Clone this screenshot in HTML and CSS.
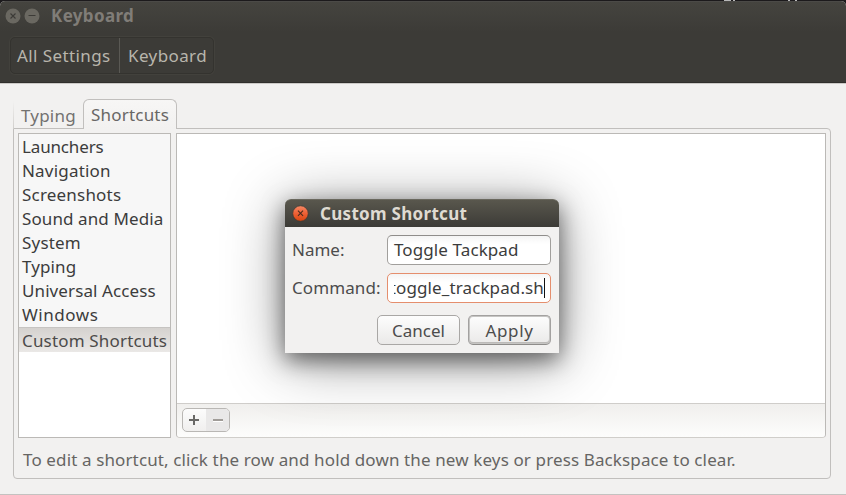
FILE: index.html
```html
<!DOCTYPE html>
<html lang="en">
<head>
<meta charset="utf-8">
<title>Keyboard</title>
<link rel="stylesheet" href="styles.css">
</head>
<body>
<div class="desktop">
  <div class="behind" aria-hidden="true"><i class="speck s1"></i><i class="speck s2"></i><i class="speck s3"></i><i class="speck s4"></i></div>
  <main class="window">
    <header class="header">
      <div class="titlebar">
        <svg class="winbtn" viewBox="0 0 16 16"><circle cx="8" cy="8" r="7.5" fill="#6a6861"/><path d="M5.5 5.5l5 5m0-5l-5 5" stroke="#3c3b37" stroke-width="1.1"/></svg>
        <svg class="winbtn" viewBox="0 0 16 16"><circle cx="8" cy="8" r="7.5" fill="#6a6861"/><path d="M4.5 7.5h7" stroke="#3c3b37" stroke-width="1"/></svg>
        <h1 class="title">Keyboard</h1>
      </div>
      <nav class="crumbs">
        <span class="crumb crumb-all"><span class="t-all">All Settings</span></span>
        <span class="crumb"><span class="t-kb">Keyboard</span></span>
      </nav>
    </header>
    <section class="content">
      <div class="tabs">
        <div class="tab"><span class="t-typ">Typing</span></div>
        <div class="tab tab-active"><span class="t-short">Shortcuts</span></div>
      </div>
      <div class="page">
        <div class="panes">
          <ul class="list">
            <li class="l1">Launchers</li>
            <li class="l2">Navigation</li>
            <li class="l3">Screenshots</li>
            <li class="l4">Sound and Media</li>
            <li class="l5">System</li>
            <li class="l6">Typing</li>
            <li class="l7">Universal Access</li>
            <li class="l8">Windows</li>
            <li class="selected">Custom Shortcuts</li>
          </ul>
          <div class="detail">
            <div class="blank"></div>
            <div class="toolbar">
              <div class="group">
                <span class="tool"><svg viewBox="0 0 24 22"><path d="M7 11h10M12 6v10" stroke="#696866" stroke-width="2"/></svg></span>
                <span class="tool off"><svg viewBox="0 0 24 22"><path d="M8 12.5h10" stroke="#fff"/><path d="M8 11h10" stroke="#a09c98" stroke-width="2"/></svg></span>
              </div>
            </div>
          </div>
        </div>
        <p class="hint"><span>To edit a shortcut, click the row and hold down the new keys or press Backspace to clear.</span></p>
      </div>
    </section>
  </main>
  <section class="dialog">
    <header class="dialog-title">
      <svg class="close" viewBox="0 0 16 16"><defs><linearGradient id="o" x2="0" y2="1"><stop stop-color="#f58965"/><stop offset=".5" stop-color="#ee6035"/><stop offset="1" stop-color="#d9450f"/></linearGradient></defs><circle cx="8" cy="8" r="7.3" fill="url(#o)" stroke="#3a3833" stroke-width=".7"/><path d="M5.6 5.4l4.8 4.8m0-4.8l-4.8 4.8" stroke="#4a2b1c" stroke-width="1"/></svg>
      <h2>Custom Shortcut</h2>
    </header>
    <div class="form">
      <label class="t-name">Name:</label>
      <div class="field"><span class="t-tog">Toggle Tackpad</span></div>
      <label class="t-cmd">Command:</label>
      <div class="field focus"><div class="clip"><span class="t-sh">toggle_trackpad.sh</span></div><i class="caret"></i></div>
    </div>
    <div class="actions">
      <div class="btn"><span class="t-can">Cancel</span></div>
      <div class="btn default"><span class="t-app">Apply</span></div>
    </div>
  </section>
</div>
</body>
</html>
```
FILE: styles.css
```css
* { box-sizing: border-box; }
body { margin: 0; font: 17px/24px "Noto Sans", "Open Sans", sans-serif; color: #3c3c3c; background: #f2f1f0; overflow: hidden; }
h1, h2, p, ul { margin: 0; padding: 0; }
span { white-space: nowrap; }
svg { display: block; }
.desktop { position: relative; width: 846px; height: 495px; display: flex; flex-direction: column; background: #1c1a1c; }
.behind { height: 1px; position: relative; }
.speck { position: absolute; top: 0; height: 1px; background: #b8b8b8; }
.s1 { left: 724px; width: 7px; }
.s2 { left: 733px; width: 2px; }
.s3 { left: 788px; width: 2px; }
.s4 { left: 795px; width: 2px; }
.window { flex: 1; display: flex; flex-direction: column; border-radius: 5px 5px 0 0; overflow: hidden; background: #f2f1f0; border-bottom: 1px solid #c4c2c0; }
.header { height: 82px; background: linear-gradient(#45443f, #3c3b37 30px); border-top: 1px solid #4b4a47; border-bottom: 1px solid #302f2c; }
.titlebar { height: 27px; display: flex; align-items: center; padding: 0 0 0 5px; gap: 3px; }
.winbtn { width: 16px; height: 16px; }
.title { margin-left: 8px; font-size: 17px; line-height: 24px; font-weight: 700; color: #807d78; letter-spacing: .35px; }
.crumbs { display: inline-flex; margin: 8px 0 0 10px; width: 204px; height: 37px; border: 1px solid #34332f; border-radius: 5px; box-shadow: 0 0 0 1px #42413c; color: #b8b5ac; }
.crumb { padding: 6px 0 0 8px; flex: 1; }
.crumb-all { flex: 0 0 109px; padding-left: 6px; border-right: 1px solid #5a5954; }
.content { flex: 1; border-top: 1px solid #cccac7; padding: 15px 15px 15px 13px; display: flex; flex-direction: column; }
.tabs { display: flex; height: 30px; position: relative; z-index: 1; }
.tab { width: 70px; padding: 5px 0 0 7px; color: #737270; border-left: 1px solid; border-image: linear-gradient(transparent 10%, #cfcdca) 1; }
.tab-active { width: 94px; padding: 3px 0 0 7px; color: #686765; border: 1px solid #c1bfbd; border-bottom: 0; border-image: none; border-radius: 6px 6px 0 0; background: linear-gradient(#f7f6f5, #f2f1f0); }
.page { margin-top: -1px; height: 351px; border: 1px solid #c1bfbd; border-radius: 0 4px 4px 4px; padding: 4px; }
.panes { display: flex; gap: 5px; height: 305px; }
.list { width: 153px; border: 1px solid #bbb9b6; background: #fff; list-style: none; }
.list li { height: 24px; line-height: 25px; padding-left: 3px; background: #f7f7f7; white-space: nowrap; letter-spacing: .1px; }
.list .l1 { letter-spacing: -.15px; }
.list .l2, .list .l3, .list .l5 { letter-spacing: .2px; }
.list .l8 { height: 25px; letter-spacing: .55px; }
.list .selected { height: 25px; color: #4c4b4a; border-top: 1px solid #c6c4c2; background: linear-gradient(#d5d2cf, #eae8e6); letter-spacing: .17px; }
.detail { flex: 1; display: flex; flex-direction: column; border: 1px solid #bbb9b6; border-bottom-color: #d0ceca; border-radius: 0 0 4px 4px; }
.blank { flex: 1; background: #fff; }
.toolbar { height: 34px; border-top: 1px solid #cfcdca; background: linear-gradient(#f0efed, #fdfdfc); padding: 4px 5px; border-radius: 0 0 3px 3px; }
.group { display: flex; width: 48px; height: 24px; border: 1px solid #b9b7b4; border-radius: 5px; overflow: hidden; background: linear-gradient(#fcfcfc, #f0efee); }
.tool { width: 23px; height: 22px; }
.tool svg { width: 24px; height: 22px; margin-left: -1px; }
.tool.off { background: #e9e8e8; }
.hint { padding: 10px 0 0 5px; color: #666563; letter-spacing: .125px; }
.dialog { position: absolute; left: 285px; top: 199px; width: 274px; height: 154px; border-radius: 6px 6px 0 0; background: #f2f1f0; box-shadow: 0 7px 22px rgba(0,0,0,.52), 0 7px 60px rgba(0,0,0,.42); }
.dialog-title { height: 28px; display: flex; align-items: center; padding-left: 7px; gap: 13px; border-radius: 6px 6px 0 0; background: linear-gradient(#59574d, #3c3b37); border-top: 1px solid #6a685e; }
.close { width: 17px; height: 17px; }
.dialog-title h2 { margin-left: -2px; font-size: 17px; font-weight: 700; color: #dfdbd2; white-space: nowrap; letter-spacing: .3px; }
.form { display: grid; grid-template-columns: 95px 164px; grid-auto-rows: 30px; row-gap: 8px; padding: 8px 8px 0 7px; color: #4c4c4c; line-height: 30px; white-space: nowrap; }
.field { display: flex; height: 30px; line-height: 28px; padding-left: 6px; border: 1px solid #a19f9c; border-top-color: #8f8d8b; border-radius: 5px; background: linear-gradient(#f4f4f4, #fff 8px); color: #3c3c3c; }
.focus { border-color: #e58e6d; align-items: center; }
.clip { width: 150px; display: flex; justify-content: flex-end; overflow: hidden; }
.caret { width: 1px; height: 20px; background: #111; }
.actions { display: flex; justify-content: flex-end; gap: 8px; padding: 12px 8px 0 0; }
.btn { width: 83px; height: 30px; display: flex; justify-content: center; line-height: 29px; border: 1px solid #a9a7a5; border-radius: 5px; background: linear-gradient(#fdfdfd, #eae9e8); color: #4c4c4c; }
.default { border-color: #a3a1a0 #a3a1a0 #8e8c8a; box-shadow: inset 0 0 0 1px #c6c5c3, inset 0 -1px 0 1px #bcbab8; }
.t-all, .t-kb { letter-spacing: .4px; }
.t-short, .t-typ { letter-spacing: .2px; }
.t-tog, .t-cmd { letter-spacing: .1px; }
.t-sh { letter-spacing: .12px; }
.t-app { letter-spacing: .6px; }
```
